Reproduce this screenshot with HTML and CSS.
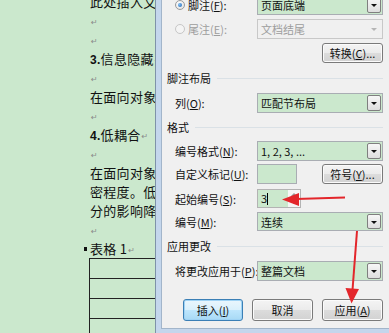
FILE: index.html
```html
<!DOCTYPE html>
<html lang="zh-CN">
<head>
    <meta charset="UTF-8">
    <meta name="viewport" content="width=device-width, initial-scale=1.0">
    <title>脚注和尾注</title>
    <link rel="stylesheet" href="styles.css">
</head>
<body>
    <div class="screen">
        <!-- Word document behind the dialog -->
        <div class="doc">
            <p class="line first">此处插入文字说明内容</p>
            <p class="line"><span class="mark">↵</span></p>
            <p class="line"><span class="mark">↵</span></p>
            <p class="line"><b>3.</b>信息隐藏<span class="mark">↵</span></p>
            <p class="line"><span class="mark">↵</span></p>
            <p class="line">在面向对象方法中</p>
            <p class="line"><span class="mark">↵</span></p>
            <p class="line"><b>4.</b>低耦合<span class="mark">↵</span></p>
            <p class="line"><span class="mark">↵</span></p>
            <p class="line">在面向对象方法中</p>
            <p class="line">密程度。低耦合</p>
            <p class="line">分的影响降到最低</p>
            <p class="line"><span class="mark">↵</span></p>
            <p class="line caption"><span class="bullet"></span>表格 1<span class="mark">↵</span></p>
            <div class="table">
                <div class="tr"></div>
                <div class="tr"></div>
                <div class="tr"></div>
                <div class="tr"></div>
            </div>
        </div>

        <!-- Footnote dialog -->
        <div class="frame">
            <div class="dialog">
                <div class="row r1">
                    <span class="radio on"></span>
                    <label class="rlabel">脚注(<u>F</u>):</label>
                    <div class="select"><span>页面底端</span><i class="drop"></i></div>
                </div>
                <div class="row r2 disabled">
                    <span class="radio"></span>
                    <label class="rlabel">尾注(<u>E</u>):</label>
                    <div class="select off"><span>文档结尾</span><i class="drop"></i></div>
                </div>
                <div class="row r3">
                    <button class="btn convert">转换(<u>C</u>)...</button>
                </div>

                <div class="group g1"><span>脚注布局</span></div>
                <div class="row sub r4">
                    <label>列(<u>O</u>):</label>
                    <div class="select"><span>匹配节布局</span><i class="drop"></i></div>
                </div>

                <div class="group g2"><span>格式</span></div>
                <div class="row sub r5">
                    <label>编号格式(<u>N</u>):</label>
                    <div class="select"><span>1, 2, 3, ...</span><i class="drop"></i></div>
                </div>
                <div class="row sub r6">
                    <label>自定义标记(<u>U</u>):</label>
                    <div class="box mark-box"></div>
                    <button class="btn symbol">符号(<u>Y</u>)...</button>
                </div>
                <div class="row sub r7">
                    <label>起始编号(<u>S</u>):</label>
                    <div class="spin">
                        <span class="val">3<i class="caret"></i></span>
                        <span class="arrows-ud"><i class="up"></i><i class="down"></i></span>
                    </div>
                </div>
                <div class="row sub r8">
                    <label>编号(<u>M</u>):</label>
                    <div class="select"><span>连续</span><i class="drop"></i></div>
                </div>

                <div class="group g3"><span>应用更改</span></div>
                <div class="row sub r9">
                    <label>将更改应用于(<u>P</u>):</label>
                    <div class="select"><span>整篇文档</span><i class="drop"></i></div>
                </div>

                <div class="buttons">
                    <button class="btn focus">插入(<u>I</u>)</button>
                    <button class="btn">取消</button>
                    <button class="btn">应用(<u>A</u>)</button>
                </div>
            </div>
        </div>

        <!-- red annotation arrows -->
        <svg class="annot" width="389" height="333" viewBox="0 0 389 333">
            <line x1="345" y1="197.5" x2="296" y2="199" stroke="#e3262b" stroke-width="2"/>
            <polygon points="282,199.5 299,193 299,206" fill="#e3262b"/>
            <line x1="357" y1="231" x2="352.5" y2="290" stroke="#e3262b" stroke-width="2"/>
            <polygon points="351.5,303.5 345.5,288 359,289" fill="#e3262b"/>
        </svg>
    </div>
</body>
</html>
```

FILE: styles.css
```css
body {
    margin: 0;
    padding: 0;
    font-family: "Noto Sans CJK SC", "Noto Sans", sans-serif;
    background-color: #f0f0f0;
}
.screen {
    position: relative;
    display: flex;
    width: 389px;
    height: 333px;
    overflow: hidden;
}

/* document */
.doc {
    width: 155px;
    flex-shrink: 0;
    background-color: #cbe8cd;
    padding-left: 90px;
    box-sizing: border-box;
    overflow: hidden;
    color: #111;
}
.line {
    margin: 0;
    height: 19px;
    line-height: 19px;
    font-size: 13px;
    letter-spacing: 0.3px;
    white-space: nowrap;
}
.line.first {
    margin-top: -8px;
}
.line b {
    font-family: "Liberation Sans", sans-serif;
    font-size: 12px;
}
.mark {
    font-family: "DejaVu Sans", sans-serif;
    font-size: 8px;
    color: #8a8a8a;
    margin-left: 1px;
    vertical-align: 1px;
}
.caption {
    margin-left: -6px;
}
.bullet {
    display: inline-block;
    width: 3px;
    height: 4px;
    background-color: #111;
    margin-right: 3px;
    vertical-align: 3px;
}
.table {
    margin-left: -1px;
    width: 200px;
    border-left: 1px solid #222;
    border-top: 1px solid #222;
}
.tr {
    height: 19px;
    border-bottom: 1px solid #222;
}

/* dialog frame */
.frame {
    flex: 1;
    border-left: 1px solid #7e92a8;
    background-color: #c4d6ec;
    padding: 0 0 4px 5px;
    display: flex;
}
.dialog {
    flex: 1;
    background-color: #f0f0f0;
    border-left: 1px solid #a2b5ca;
    border-bottom: 1px solid #a2b5ca;
    padding: 0 6px 0 5px;
    font-size: 11px;
    color: #111;
    display: flex;
    flex-direction: column;
}
.row {
    display: flex;
    align-items: center;
    height: 20px;
    flex-shrink: 0;
}
.row.sub {
    padding-left: 8px;
}
.row label {
    width: 82px;
    white-space: nowrap;
}
.row .rlabel {
    width: 69px;
}
.disabled label {
    color: #9d9d9d;
}
.r1 { margin-top: -5px; }
.r2 { margin-top: 4px; }
.r3 { margin-top: 4px; justify-content: flex-end; }
.r4 { margin-top: 8px; }
.r5 { margin-top: 7px; }
.r6 { margin-top: 3px; }
.r7 { margin-top: 5px; height: 19px; }
.r8 { margin-top: 4px; height: 19px; }
.r9 { margin-top: 8px; }

.radio {
    width: 10px;
    height: 10px;
    margin: 0 3px 0 8px;
    border: 1px solid #9a9a9a;
    border-radius: 50%;
    background: radial-gradient(circle at 40% 35%, #ffffff, #dcdcdc);
    box-sizing: border-box;
    position: relative;
}
.radio.on::after {
    content: "";
    position: absolute;
    left: 2px;
    top: 2px;
    width: 4px;
    height: 4px;
    border-radius: 50%;
    background: radial-gradient(circle at 35% 35%, #7fc0f5, #1d5fae);
}
.disabled .radio {
    border-color: #c6c6c6;
    background: #f4f4f4;
}

.select {
    flex: 1;
    align-self: stretch;
    display: flex;
    align-items: center;
    border: 1px solid #a9adb3;
    background-color: #cbe8cd;
    padding-left: 3px;
}
.select span {
    flex: 1;
}
.select.off {
    background-color: #f0f0f0;
    border-color: #c8c8c8;
    color: #9d9d9d;
}
.drop {
    width: 14px;
    align-self: stretch;
    margin: 1px;
    border: 1px solid #7f7f7f;
    border-radius: 2px;
    background: linear-gradient(#f7f7f7, #dedede);
    box-sizing: border-box;
    position: relative;
}
.drop::after {
    content: "";
    position: absolute;
    left: 3px;
    top: 6px;
    border-left: 3px solid transparent;
    border-right: 3px solid transparent;
    border-top: 3px solid #111;
}
.off .drop {
    border-color: transparent;
    background: none;
}
.off .drop::after {
    border-top-color: #b5b5b5;
}

.btn {
    font-family: inherit;
    font-size: 11px;
    color: #111;
    height: 20px;
    width: 61px;
    padding: 0;
    border: 1px solid #7a7a7a;
    border-radius: 3px;
    background: linear-gradient(#f4f4f4 0%, #ebebeb 50%, #dcdcdc 51%, #d2d2d2 100%);
    box-shadow: inset 0 0 0 1px #fbfbfb;
}
.symbol {
    margin-left: auto;
}
.box {
    width: 40px;
    height: 20px;
    border: 1px solid #a9adb3;
    background-color: #cbe8cd;
    box-sizing: border-box;
}
.spin {
    width: 44px;
    height: 19px;
    display: flex;
    border: 1px solid #b3b3b3;
    box-sizing: border-box;
    background-color: #f6f6f6;
}
.spin .val {
    width: 30px;
    background-color: #cbe8cd;
    padding-left: 3px;
    line-height: 17px;
    font-size: 11px;
    box-sizing: border-box;
}
.caret {
    display: inline-block;
    width: 1px;
    height: 12px;
    background-color: #000;
    vertical-align: -2px;
}
.arrows-ud {
    flex: 1;
    display: flex;
    flex-direction: column;
    justify-content: space-around;
    align-items: center;
}
.arrows-ud i {
    width: 0;
    height: 0;
    border-left: 3px solid transparent;
    border-right: 3px solid transparent;
}
.arrows-ud .up {
    border-bottom: 3px solid #9a9a9a;
}
.arrows-ud .down {
    border-top: 3px solid #9a9a9a;
}

.group {
    display: flex;
    align-items: center;
    height: 14px;
    gap: 6px;
    flex-shrink: 0;
}
.group::after {
    content: "";
    flex: 1;
    height: 1px;
    background-color: #dae1e6;
}
.g1 { margin-top: 8px; }
.g2 { margin-top: 7px; }
.g3 { margin-top: 8px; }

.buttons {
    display: flex;
    gap: 9px;
    margin-top: 18px;
    padding-left: 16px;
}
.buttons .btn {
    height: 22px;
}
.buttons .focus {
    width: 60px;
    border-color: #3b7fb5;
    box-shadow: inset 0 0 0 1px #9fd3f5;
    background: linear-gradient(#eaf6fd 0%, #d9f0fc 50%, #bee6fd 51%, #a7d9f5 100%);
}

.annot {
    position: absolute;
    left: 0;
    top: 0;
    pointer-events: none;
}
```
